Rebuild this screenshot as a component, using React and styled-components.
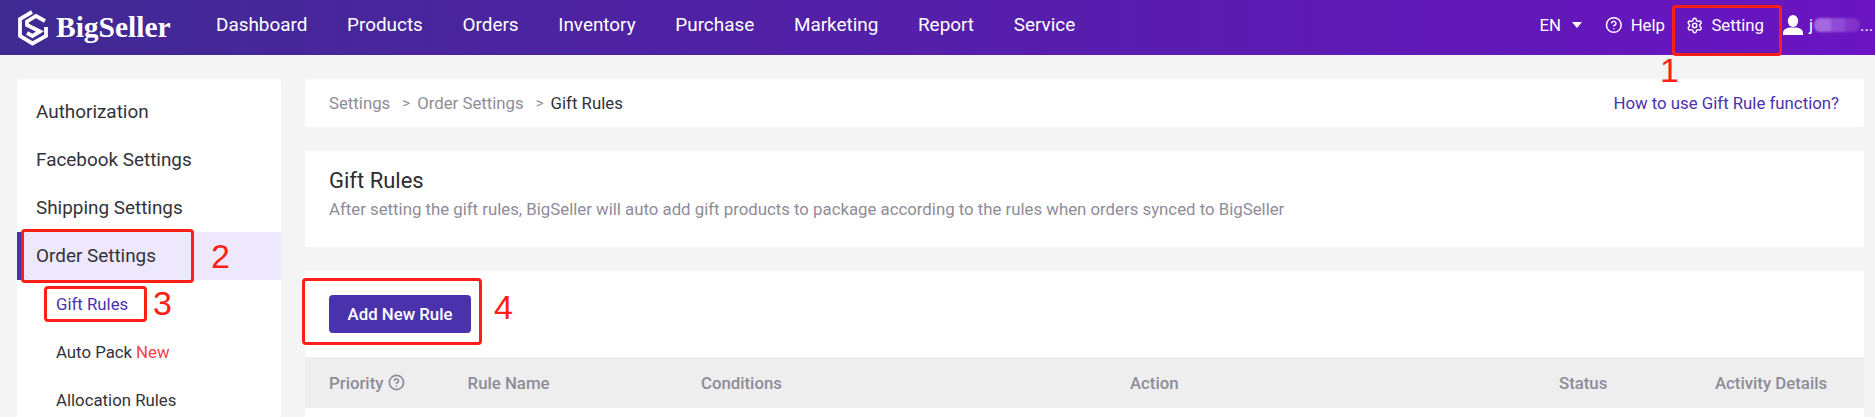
import React from 'react';
import styled, { createGlobalStyle } from 'styled-components';
import { Settings, CircleHelp } from 'lucide-react';

const GlobalStyle = createGlobalStyle`
  html, body { margin: 0; padding: 0; height: 417px; overflow: hidden; background: #f4f4f4; }
  body { font-family: Roboto, "Liberation Sans", sans-serif; }
  * { box-sizing: border-box; }
`;

const navItems = ['Dashboard', 'Products', 'Orders', 'Inventory', 'Purchase', 'Marketing', 'Report', 'Service'];
const sideItems = ['Authorization', 'Facebook Settings', 'Shipping Settings'];
const columns = ['Rule Name', 'Conditions', 'Action', 'Status', 'Activity Details'];

const marks = [
  { x: 1672, y: 5, w: 110, h: 51 },
  { x: 21, y: 229, w: 173, h: 54 },
  { x: 44, y: 286, w: 103, h: 36 },
  { x: 302, y: 278, w: 180, h: 67 },
];
const numbers = [
  { n: 1, x: 1660, y: 51 },
  { n: 2, x: 211, y: 237 },
  { n: 3, x: 153, y: 284 },
  { n: 4, x: 494, y: 288 },
];

export default function App() {
  return (
    <Page>
      <GlobalStyle />
      <Header>
        <Logo>
          <svg width="32" height="36" viewBox="0 0 32 36" fill="none" stroke="#fff" strokeWidth="3.8">
            <path d="M15 2 L3 9 V26 L15.5 33.5 L29 26 V17" />
            <path d="M28 11 L19 6 L10 11.5 V15 L23 21.5 L15.5 26 L10 23" />
          </svg>
          <LogoText>BigSeller</LogoText>
        </Logo>
        <Nav>
          {navItems.map(item => <NavItem key={item}>{item}</NavItem>)}
        </Nav>
        <Tools>
          <Lang>EN<Caret /></Lang>
          <Tool $width={60}><CircleHelp size={20} strokeWidth={2} />Help</Tool>
          <Tool $width={78}><Settings size={19} strokeWidth={2} />Setting</Tool>
          <UserBox>
            <svg width="20" height="20" viewBox="0 0 20 20" fill="#fff">
              <ellipse cx="10" cy="6" rx="5.2" ry="6" />
              <path d="M0 20 V17.5 C0 14.5 4 13 6.5 12.5 H13.5 C16 13 20 14.5 20 17.5 V20 Z" />
            </svg>
            <UserName>j<Blur />...</UserName>
          </UserBox>
        </Tools>
      </Header>
      <Body>
        <Sidebar>
          {sideItems.map(item => <SideItem key={item}>{item}</SideItem>)}
          <SideItem $active>Order Settings</SideItem>
          <SubItem $current>Gift Rules</SubItem>
          <SubItem>Auto Pack <NewTag>New</NewTag></SubItem>
          <SubItem>Allocation Rules</SubItem>
        </Sidebar>
        <Main>
          <Breadcrumb>
            <Crumbs>
              <Crumb>Settings</Crumb>
              <Sep>&gt;</Sep>
              <Crumb>Order Settings</Crumb>
              <Sep>&gt;</Sep>
              <Crumb $last>Gift Rules</Crumb>
            </Crumbs>
            <HelpLink>How to use Gift Rule function?</HelpLink>
          </Breadcrumb>
          <IntroCard>
            <Title>Gift Rules</Title>
            <Subtitle>After setting the gift rules, BigSeller will auto add gift products to package according to the rules when orders synced to BigSeller</Subtitle>
          </IntroCard>
          <RulesCard>
            <AddButton>Add New Rule</AddButton>
            <TableHead>
              <HeadCell>
                Priority
                <CircleHelp size={17} strokeWidth={2.4} />
              </HeadCell>
              {columns.map(col => <HeadCell key={col}>{col}</HeadCell>)}
            </TableHead>
          </RulesCard>
        </Main>
      </Body>
      {marks.map(m => <Mark key={m.x} $x={m.x} $y={m.y} $w={m.w} $h={m.h} />)}
      {numbers.map(m => <Num key={m.n} $x={m.x} $y={m.y}>{m.n}</Num>)}
    </Page>
  );
}

const Page = styled.div`
  position: relative;
  width: 1875px;
  height: 417px;
  overflow: hidden;
`;

const Header = styled.header`
  display: flex;
  align-items: center;
  height: 55px;
  padding-left: 17px;
  background: linear-gradient(90deg, #3f2a92 0%, #6a14c2 100%);
  color: #fff;
`;

const Logo = styled.div`
  display: flex;
  align-items: center;
  gap: 7px;
  width: 199px;
`;

const LogoText = styled.span`
  font-family: "Liberation Serif", serif;
  font-weight: 700;
  font-size: 29.5px;
`;

const Nav = styled.nav`
  display: flex;
  gap: 39.7px;
  margin-bottom: 7px;
`;

const NavItem = styled.span`
  font-size: 18.9px;
`;

const Tools = styled.div`
  display: flex;
  align-items: center;
  margin-left: auto;
  margin-bottom: 5px;
  font-size: 16.8px;
`;

const Lang = styled.div`
  display: flex;
  align-items: center;
  gap: 11px;
  margin-right: 23px;
`;

const Caret = styled.i`
  border-left: 5.5px solid transparent;
  border-right: 5.5px solid transparent;
  border-top: 6px solid #fff;
`;

const Tool = styled.div`
  display: flex;
  align-items: center;
  justify-content: flex-end;
  gap: 8px;
  width: ${p => p.$width}px;
  margin-right: 21px;
`;

const UserBox = styled.div`
  display: flex;
  align-items: center;
  gap: 6px;
  width: 92px;
  margin-left: -2px;
`;

const UserName = styled.span`
  display: flex;
  align-items: center;
`;

const Blur = styled.i`
  width: 46px;
  height: 14px;
  margin-left: 1px;
  border-radius: 6px;
  background: linear-gradient(90deg, #a468e0 0%, #a468e0 35%, #8f4ad8 40%, #8f4ad8 65%, #8438cc 70%, #7f2fc8 100%);
  filter: blur(1px);
`;

const Body = styled.div`
  display: flex;
  align-items: flex-start;
  gap: 24px;
  padding: 24px 11px 0 17px;
`;

const Sidebar = styled.aside`
  display: flex;
  flex-direction: column;
  flex: 0 0 264px;
  height: 345px;
  padding-top: 9px;
  background: #fff;
  border-radius: 4px 4px 0 0;
`;

const SideItem = styled.div`
  display: flex;
  align-items: center;
  flex: none;
  height: 48px;
  padding-left: ${p => (p.$active ? 14 : 19)}px;
  padding-bottom: 2px;
  font-size: 18.9px;
  color: #33323a;
  background: ${p => (p.$active ? '#ede8fb' : 'transparent')};
  border-left: ${p => (p.$active ? '5px solid #4a32ad' : '0')};
`;

const SubItem = styled.div`
  display: flex;
  align-items: center;
  flex: none;
  gap: 4px;
  height: 48px;
  padding-left: 39px;
  font-size: 16.8px;
  color: ${p => (p.$current ? '#4a32ad' : '#33323a')};
`;

const NewTag = styled.span`
  color: #f5424f;
`;

const Main = styled.main`
  display: flex;
  flex-direction: column;
  flex: 1;
  gap: 24px;
`;

const Breadcrumb = styled.div`
  display: flex;
  align-items: center;
  justify-content: space-between;
  height: 48px;
  padding: 0 25px 0 24px;
  background: #fff;
  border-radius: 4px;
  font-size: 16.8px;
`;

const Crumbs = styled.div`
  display: flex;
  align-items: center;
`;

const Crumb = styled.span`
  color: ${p => (p.$last ? '#33323a' : '#8f8c99')};
`;

const Sep = styled.span`
  margin: 0 7px 0 12px;
  color: #8f8c99;
  font-size: 15px;
`;

const HelpLink = styled.a`
  color: #4a32ad;
`;

const IntroCard = styled.section`
  height: 96px;
  padding: 17px 24px 0;
  background: #fff;
`;

const Title = styled.h2`
  margin: 0;
  font-size: 22px;
  font-weight: 400;
  line-height: 26px;
  color: #2d2c33;
`;

const Subtitle = styled.p`
  margin: 3px 0 0;
  font-size: 16.8px;
  line-height: 24px;
  color: #8f8c99;
`;

const RulesCard = styled.section`
  display: flex;
  flex-direction: column;
  height: 146px;
  padding-top: 24px;
  background: #fff;
`;

const AddButton = styled.button`
  width: 142px;
  height: 38px;
  margin-left: 24px;
  padding: 0;
  border: 0;
  border-radius: 4px;
  background: #4a32ad;
  color: #fff;
  font-family: inherit;
  font-size: 16.8px;
  font-weight: 500;
`;

const TableHead = styled.div`
  display: grid;
  grid-template-columns: 138.6px 233.4px 429px 429px 156px 1fr;
  align-items: center;
  height: 51px;
  margin-top: 24px;
  padding-left: 24px;
  background: #eee;
`;

const HeadCell = styled.div`
  display: flex;
  align-items: center;
  gap: 5px;
  font-size: 16.8px;
  font-weight: 500;
  color: #8f8c99;
`;

const Mark = styled.div`
  position: absolute;
  left: ${p => p.$x}px;
  top: ${p => p.$y}px;
  width: ${p => p.$w}px;
  height: ${p => p.$h}px;
  border: 3px solid #fe2016;
  border-radius: 4px;
`;

const Num = styled.span`
  position: absolute;
  left: ${p => p.$x}px;
  top: ${p => p.$y}px;
  font-family: "Liberation Sans", sans-serif;
  font-size: 34px;
  line-height: 38px;
  color: #fe2016;
`;
